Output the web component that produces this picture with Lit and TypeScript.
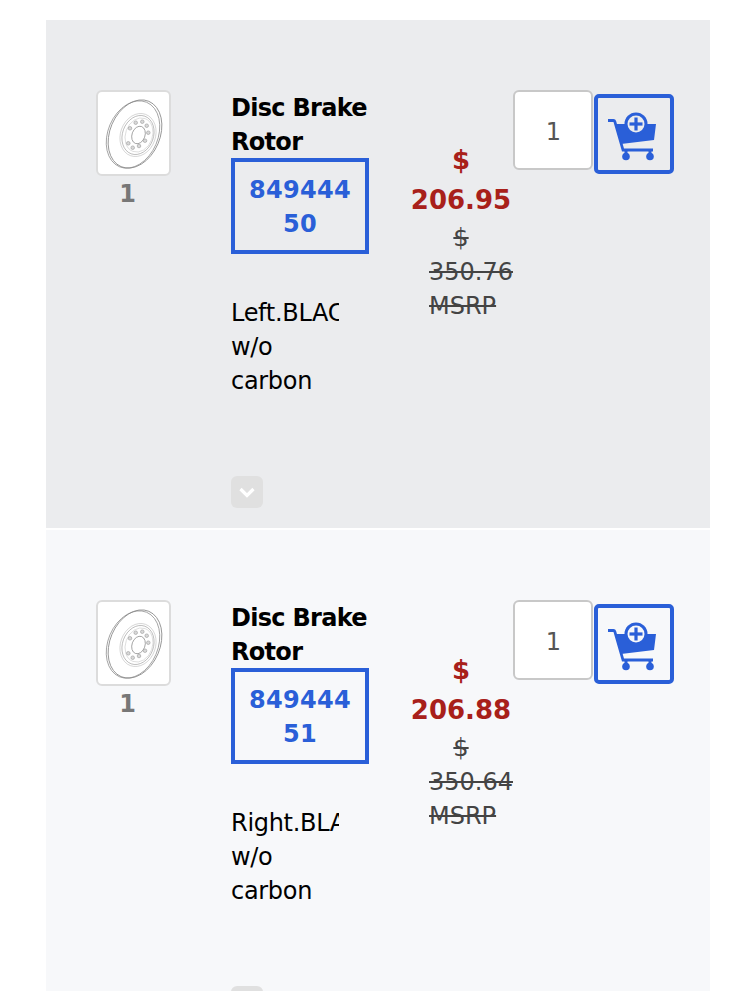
import { LitElement, html, css, svg } from "lit";
import { customElement } from "lit/decorators.js";

const ROWS = [
  { part: ["849444", "50"], desc: "Left.BLACK w/o carbon", price: "206.95", old: "350.76" },
  { part: ["849444", "51"], desc: "Right.BLACK w/o carbon", price: "206.88", old: "350.64" },
];

const rotor = svg`<svg class="rotor" viewBox="0 0 71 82" aria-hidden="true">
  <g fill="none" stroke="#8a8a8a">
    <ellipse cx="37" cy="42" rx="25" ry="35.500" transform="rotate(23 37 42)" stroke-width="0.8"/>
    <ellipse cx="35" cy="42.500" rx="25" ry="35" transform="rotate(23 35 42.500)" stroke-width="0.7"/>
    <ellipse cx="40" cy="43" rx="17.500" ry="22" transform="rotate(20 40 43)" stroke-width="0.5" stroke="#b5b5b5"/>
    <ellipse cx="40" cy="43" rx="15.500" ry="20" transform="rotate(20 40 43)" stroke-width="0.5"/>
    <ellipse cx="41" cy="43" rx="13.500" ry="17.500" transform="rotate(20 41 43)" stroke-width="0.4" stroke="#b5b5b5"/>
    <ellipse cx="40.500" cy="43" rx="6.500" ry="9" transform="rotate(20 40.500 43)" stroke-width="0.7"/>
    <g stroke-width="0.5" fill="#d8d8d8">
      <circle cx="37.700" cy="30.700" r="1.800"/><circle cx="44.300" cy="29.700" r="1.800"/><circle cx="48.700" cy="33.700" r="1.800"/>
      <circle cx="50.300" cy="40.700" r="1.800"/><circle cx="47" cy="48.700" r="1.800"/><circle cx="41" cy="54" r="1.800"/>
      <circle cx="34.700" cy="55.700" r="1.800"/><circle cx="30.300" cy="51.300" r="1.800"/><circle cx="32" cy="36.300" r="1.800"/>
    </g>
  </g>
</svg>`;

const cart = svg`<svg class="cart" viewBox="0 0 72 72" aria-hidden="true">
  <g transform="translate(-4 -4)" fill="#2a5fd8">
    <path d="M14 25h5.500q2 0 2.600 2L30 54.500h29v3H28L19.500 28H14z"/>
    <path d="M21.500 30H62L60 46 27 50z"/>
    <circle cx="42" cy="30" r="11.500"/>
    <circle class="hole" cx="42" cy="30" r="8.500"/>
    <rect x="40.400" y="23.500" width="3.200" height="13"/>
    <rect x="35.500" y="28.400" width="13" height="3.200"/>
    <rect x="30.500" y="56" width="3" height="5"/>
    <rect x="54.500" y="56" width="3" height="5"/>
    <circle cx="32" cy="62.500" r="3.800"/>
    <circle cx="56" cy="62.500" r="3.800"/>
  </g>
</svg>`;

const chevron = svg`<svg class="chev" viewBox="0 0 32 32" aria-hidden="true"><path d="M9.500 13 16 19.500 22.500 13" fill="none" stroke="#fff" stroke-width="3.200"/></svg>`;

@customElement("app-root")
export class AppRoot extends LitElement {
  static styles = css`
    :host {
      display: block;
      height: 991px;
      overflow: hidden;
      background: #fff;
      font-family: "DejaVu Sans", Verdana, sans-serif;
      font-size: 24px;
      line-height: 34px;
      color: #000;
    }
    .list {
      display: flex;
      flex-direction: column;
      gap: 2px;
      width: 664px;
      margin-left: 46px;
      padding-top: 20px;
    }
    .row {
      --row-bg: #ebecee;
      display: flex;
      align-items: flex-start;
      height: 508px;
      box-sizing: border-box;
      padding: 70px 0 0 50px;
      background: var(--row-bg);
    }
    .row.alt {
      --row-bg: #f7f8fa;
    }
    .thumb-col {
      width: 75px;
      flex: none;
      display: flex;
      flex-direction: column;
      align-items: center;
    }
    .thumb {
      width: 75px;
      height: 86px;
      box-sizing: border-box;
      background: #fff;
      border: 2px solid #dcdcdc;
      border-radius: 6px;
    }
    .rotor {
      display: block;
      width: 71px;
      height: 82px;
    }
    .count {
      margin-top: 1px;
      padding-right: 12px;
      font-weight: 700;
      color: #777;
    }
    .info {
      flex: none;
      margin-left: 60px;
      width: 138px;
      height: 418px;
      display: flex;
      flex-direction: column;
      align-items: flex-start;
    }
    .name {
      height: 68px;
      box-sizing: border-box;
      padding-top: 1px;
      font-weight: 700;
      letter-spacing: -0.7px;
      white-space: nowrap;
    }
    .part {
      width: 138px;
      height: 96px;
      box-sizing: border-box;
      border: 4px solid #2a5fd8;
      padding: 11px 0;
      text-align: center;
      font-weight: 700;
      color: #2a5fd8;
      letter-spacing: 0.3px;
    }
    .part span {
      display: block;
    }
    .desc {
      margin-top: 42px;
      width: 108px;
      overflow: hidden;
      letter-spacing: -0.3px;
    }
    .toggle {
      margin-top: auto;
      width: 32px;
      height: 32px;
      background: #e0e0e0;
      border-radius: 6px;
    }
    .chev {
      display: block;
      width: 32px;
      height: 32px;
    }
    .price {
      flex: none;
      margin-left: 42px;
      width: 100px;
      padding-top: 50px;
      display: flex;
      flex-direction: column;
      align-items: center;
      text-align: center;
    }
    .now {
      color: #a8201a;
      font-weight: 700;
      font-size: 26px;
      line-height: 40px;
    }
    .old {
      width: 64px;
      margin-top: 1px;
      color: #444;
      text-decoration: line-through;
    }
    .old span {
      display: block;
    }
    .old .left {
      text-align: left;
    }
    .old .c {
      text-align: center;
    }
    .buy {
      flex: none;
      margin-left: 2px;
      display: flex;
      align-items: flex-start;
      gap: 1px;
    }
    .qty {
      width: 80px;
      height: 80px;
      box-sizing: border-box;
      background: #fff;
      border: 2px solid #c8c8c8;
      border-radius: 6px;
      padding: 23px 0 0 1px;
      text-align: center;
      color: #555;
    }
    .add {
      margin-top: 4px;
      width: 80px;
      height: 80px;
      box-sizing: border-box;
      border: 4px solid #2a5fd8;
      border-radius: 5px;
    }
    .cart {
      display: block;
      width: 72px;
      height: 72px;
    }
    .hole {
      fill: var(--row-bg);
    }
  `;

  render() {
    return html`<div class="list">
      ${ROWS.map(
        (r, i) => html`<div class="row ${i ? "alt" : ""}">
          <div class="thumb-col">
            <div class="thumb">${rotor}</div>
            <div class="count">1</div>
          </div>
          <div class="info">
            <div class="name">Disc Brake<br />Rotor</div>
            <div class="part">${r.part.map((p) => html`<span>${p}</span>`)}</div>
            <div class="desc">${r.desc}</div>
            <div class="toggle">${chevron}</div>
          </div>
          <div class="price">
            <div class="now">$<br />${r.price}</div>
            <div class="old">
              <span class="c">$</span>
              <span class="left">${r.old}</span>
              <span class="left">MSRP</span>
            </div>
          </div>
          <div class="buy">
            <div class="qty">1</div>
            <div class="add">${cart}</div>
          </div>
        </div>`
      )}
    </div>`;
  }
}
